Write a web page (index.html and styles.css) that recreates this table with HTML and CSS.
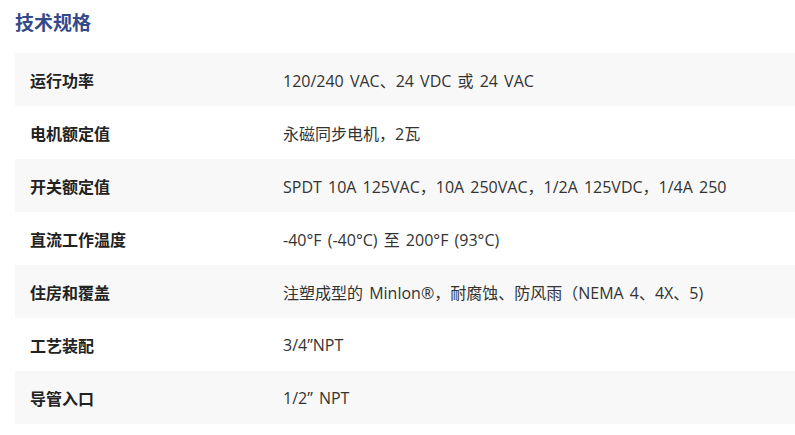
FILE: index.html
```html
<!DOCTYPE html>
<html lang="zh-CN">
<head>
<meta charset="utf-8">
<title>技术规格</title>
<link rel="stylesheet" href="styles.css">
</head>
<body>
<section class="specs">
  <h2 class="specs-title">技术规格</h2>
  <div class="spec-table">
    <div class="spec-row">
      <div class="spec-label">运行功率</div>
      <div class="spec-value">120/240 VAC、24 VDC 或 24 VAC</div>
    </div>
    <div class="spec-row">
      <div class="spec-label">电机额定值</div>
      <div class="spec-value">永磁同步电机，2瓦</div>
    </div>
    <div class="spec-row">
      <div class="spec-label">开关额定值</div>
      <div class="spec-value">SPDT 10A 125VAC，10A 250VAC，1/2A 125VDC，1/4A 250</div>
    </div>
    <div class="spec-row">
      <div class="spec-label">直流工作温度</div>
      <div class="spec-value">-40°F (-40°C) 至 200°F (93°C)</div>
    </div>
    <div class="spec-row">
      <div class="spec-label">住房和覆盖</div>
      <div class="spec-value">注塑成型的 Minlon®，耐腐蚀、防风雨（NEMA 4、4X、5)</div>
    </div>
    <div class="spec-row">
      <div class="spec-label">工艺装配</div>
      <div class="spec-value">3/4”NPT</div>
    </div>
    <div class="spec-row">
      <div class="spec-label">导管入口</div>
      <div class="spec-value">1/2” NPT</div>
    </div>
  </div>
</section>
</body>
</html>
```

FILE: styles.css
```css
html, body {
  margin: 0;
  padding: 0;
  background: #ffffff;
}

body {
  font-family: "Open Sans", "Noto Sans CJK SC", sans-serif;
  color: #333333;
  overflow: hidden;
}

.specs {
  padding: 8px 0 0 15px;
}

.specs-title {
  margin: 0 0 17px 0;
  font-family: "Noto Sans CJK SC", sans-serif;
  font-size: 19px;
  line-height: 28px;
  font-weight: 700;
  color: #34498a;
}

.spec-table {
  display: flex;
  flex-direction: column;
}

.spec-row {
  display: flex;
  align-items: center;
  height: 53px;
}

.spec-row:nth-child(odd) {
  background: #f8f8f8;
}

.spec-label {
  flex: 0 0 253px;
  padding-left: 15px;
  font-family: "Noto Sans CJK SC", sans-serif;
  font-size: 16px;
  font-weight: 700;
  color: #222222;
}

.spec-value {
  font-size: 16px;
  word-spacing: 2px;
  color: #333333;
  white-space: nowrap;
}
```
